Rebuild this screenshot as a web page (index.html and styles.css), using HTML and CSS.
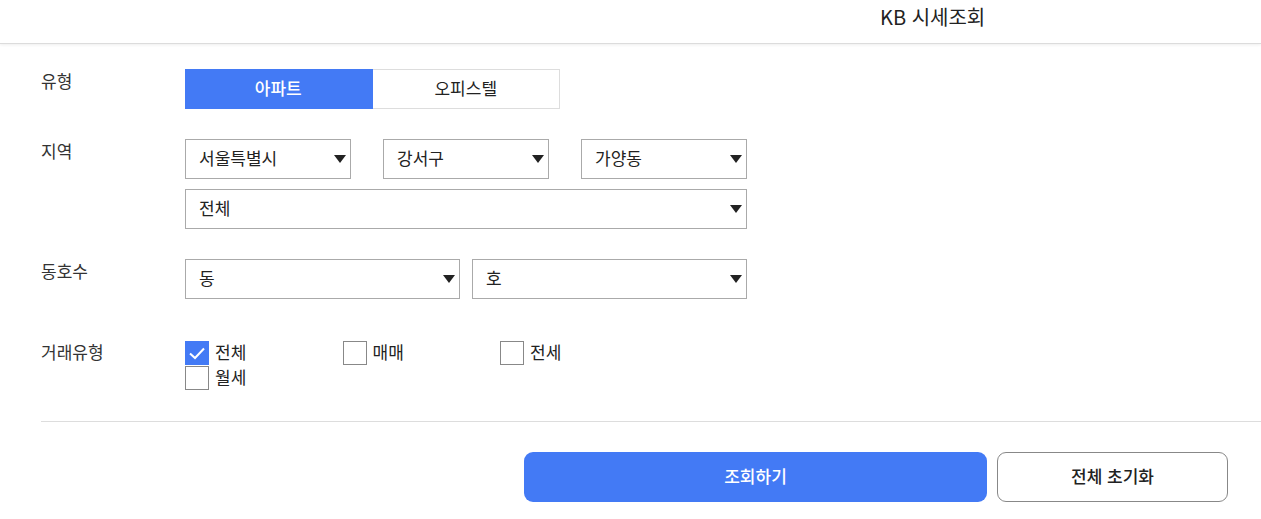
FILE: index.html
```html
<!DOCTYPE html>
<html lang="ko">
<head>
<meta charset="utf-8">
<title>KB 시세조회</title>
<link rel="stylesheet" href="styles.css">
</head>
<body>
<header class="top">
  <h1 class="title">KB 시세조회</h1>
</header>
<main class="form">
  <div class="row">
    <div class="label">유형</div>
    <div class="seg">
      <button class="seg-btn active">아파트</button>
      <button class="seg-btn">오피스텔</button>
    </div>
  </div>

  <div class="row">
    <div class="label">지역</div>
    <div class="fields">
      <div class="sel-line gap-lg">
        <div class="sel w-s"><span>서울특별시</span><svg class="caret" width="12" height="8" viewBox="0 0 12 8"><path d="M0 0H12L6 8Z"/></svg></div>
        <div class="sel w-s"><span>강서구</span><svg class="caret" width="12" height="8" viewBox="0 0 12 8"><path d="M0 0H12L6 8Z"/></svg></div>
        <div class="sel w-s"><span>가양동</span><svg class="caret" width="12" height="8" viewBox="0 0 12 8"><path d="M0 0H12L6 8Z"/></svg></div>
      </div>
      <div class="sel-line">
        <div class="sel w-full"><span>전체</span><svg class="caret" width="12" height="8" viewBox="0 0 12 8"><path d="M0 0H12L6 8Z"/></svg></div>
      </div>
    </div>
  </div>

  <div class="row">
    <div class="label">동호수</div>
    <div class="sel-line gap-sm">
      <div class="sel w-half"><span>동</span><svg class="caret" width="12" height="8" viewBox="0 0 12 8"><path d="M0 0H12L6 8Z"/></svg></div>
      <div class="sel w-half"><span>호</span><svg class="caret" width="12" height="8" viewBox="0 0 12 8"><path d="M0 0H12L6 8Z"/></svg></div>
    </div>
  </div>

  <div class="row row-deal">
    <div class="label label-deal">거래유형</div>
    <div class="checks">
      <label class="chk"><span class="box checked"><svg width="24" height="24" viewBox="0 0 24 24"><path d="M5 12.5L10 17L19 7.5" fill="none" stroke="#fff" stroke-width="2"/></svg></span><span>전체</span></label>
      <label class="chk"><span class="box"></span><span>매매</span></label>
      <label class="chk"><span class="box"></span><span>전세</span></label>
      <label class="chk"><span class="box"></span><span>월세</span></label>
    </div>
  </div>
</main>
<div class="divider"></div>
<div class="actions">
  <button class="btn btn-primary">조회하기</button>
  <button class="btn btn-outline">전체 초기화</button>
</div>
</body>
</html>
```

FILE: styles.css
```css
body {
  margin: 0;
  background: #fff;
  color: #222;
  font-family: "Noto Sans CJK KR", "Noto Sans", sans-serif;
}

.top {
  height: 43px;
  border-bottom: 1px solid #dcdcdc;
  box-shadow: 0 1px 3px rgba(0, 0, 0, 0.07);
  padding-left: 880px;
}

.title {
  margin: 0;
  padding-top: 4px;
  font-size: 20px;
  font-weight: 400;
  line-height: 26px;
  color: #222;
}

.form {
  padding: 25px 0 0 41px;
}

.row {
  display: flex;
  align-items: flex-start;
}

.row + .row {
  margin-top: 30px;
}

.row.row-deal {
  margin-top: 42px;
}

.label {
  width: 144px;
  flex: none;
  font-size: 17px;
  line-height: 22px;
  padding-top: 1px;
  color: #333;
}

.label-deal {
  padding-top: 0;
}

.seg {
  display: flex;
  width: 375px;
}

.seg-btn {
  flex: 1;
  height: 40px;
  margin: 0;
  font-family: inherit;
  font-size: 17px;
  color: #222;
  background: #fff;
  border: 1px solid #dddddd;
  border-left: none;
  padding: 0 0 3px;
}

.seg-btn.active {
  background: #437af5;
  border-color: #437af5;
  color: #fff;
  font-weight: 500;
}

.fields {
  display: flex;
  flex-direction: column;
  gap: 10px;
}

.sel-line {
  display: flex;
}

.gap-lg {
  gap: 32px;
}

.gap-sm {
  gap: 12px;
}

.sel {
  box-sizing: border-box;
  height: 40px;
  display: flex;
  align-items: center;
  justify-content: space-between;
  padding: 0 4px 0 13px;
  border: 1px solid #aaaaaa;
  font-size: 17px;
  color: #222;
}

.sel span {
  padding-bottom: 3px;
}

.w-s {
  width: 166px;
}

.w-full {
  width: 562px;
}

.w-half {
  width: 275px;
}

.caret {
  fill: #222;
  flex: none;
}

.checks {
  display: grid;
  grid-template-columns: repeat(3, 157.5px);
  grid-auto-rows: 25px;
}

.chk {
  display: flex;
  align-items: flex-start;
  gap: 6px;
  font-size: 17px;
  line-height: 22px;
  color: #222;
}

.box {
  box-sizing: border-box;
  width: 24px;
  height: 24px;
  border: 1px solid #888;
  background: #fff;
  flex: none;
}

.box.checked {
  background: #437af5;
  border-color: #437af5;
}

.box svg {
  display: block;
  margin: -1px;
}

.divider {
  margin: 30px 0 0 41px;
  height: 1px;
  background: #dddddd;
}

.actions {
  display: flex;
  justify-content: flex-end;
  gap: 10px;
  margin-top: 30px;
  padding-right: 33px;
}

.btn {
  height: 50px;
  margin: 0;
  border-radius: 9px;
  font-family: inherit;
  font-size: 17px;
  font-weight: 500;
  padding: 0 0 3px;
}

.btn-primary {
  width: 463px;
  background: #437af5;
  border: none;
  color: #fff;
}

.btn-outline {
  width: 231px;
  background: #fff;
  border: 1px solid #888;
  color: #222;
}
```
